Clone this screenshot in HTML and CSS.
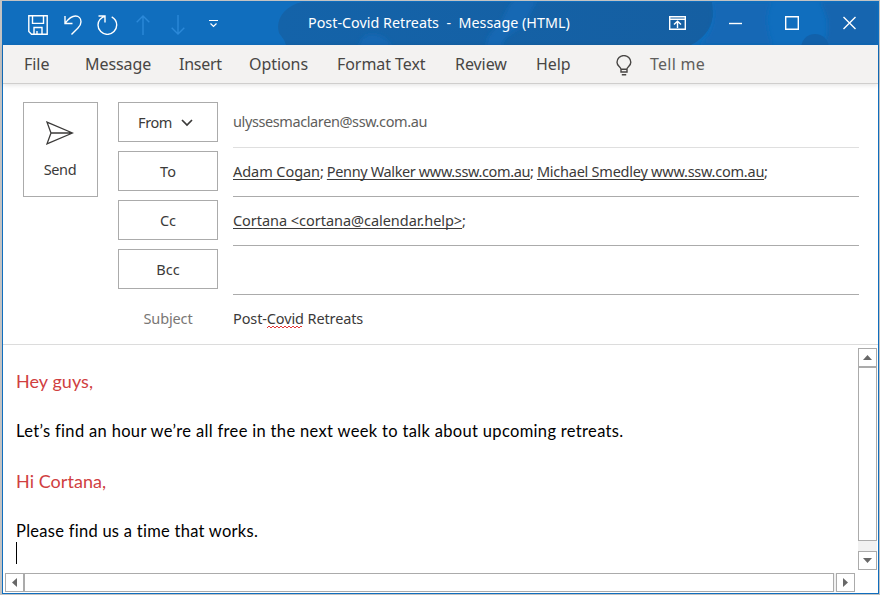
FILE: index.html
```
<!DOCTYPE html>
<html lang="en">
<head>
<meta charset="utf-8">
<title>Post-Covid Retreats - Message (HTML)</title>
<link rel="stylesheet" href="styles.css">
</head>
<body>
<div class="window">
  <header class="titlebar">
    <svg class="clouds" width="875" height="43" viewBox="3 2 875 43">
      <defs>
        <linearGradient id="deep" x1="0" x2="1"><stop offset="0" stop-color="#1463a9"/><stop offset="1" stop-color="#155fa2"/></linearGradient>
        <filter id="soft"><feGaussianBlur stdDeviation="2"/></filter>
      </defs>
      <path d="M302 2C284 6 275 20 279 33l5 7 2 5h405c20-10 25-28 21-43z" fill="url(#deep)"/>
      <g filter="url(#soft)">
        <path d="M358 48c2-10 8-14 14-14s18 4 20 14zM502 48c0-10 12-17 22-22 4-8 8-18 14-26h-24c-8 8-10 16-14 24-10 8-14 14-14 24z" fill="#1268b3"/>
        <path d="M712 2h60c-8 12-5 27 0 43h-74c14-8 19-28 14-43z" fill="#1268b5"/>
        <path d="M820 2h58v43h-55c8-14 5-30-3-43z" fill="#1265af"/>
      </g>
      <circle cx="815" cy="48" r="14" fill="#1261aa"/>
    </svg>
    <div class="quick">
      <svg width="20" height="20" viewBox="0 0 20 20"><path d="M.8.8h18.4v18.4H3.5L.8 16.5zM4.5 1v7.4h11V1M6 19v-6.5h8V19M9 16v3"/></svg>
      <svg width="18" height="20" viewBox="0 0 18 20"><path d="M1 1v7.5h7.5M1.2 8.2C5 3 8 1 11.500 1c3.300 0 5.500 2.500 5.500 5.700 0 2.500-1 4.200-3 6.200L7.500 19.500"/></svg>
      <svg width="21" height="20" viewBox="0 0 21 20"><path d="M1.500 1H8v6.500M8 1.200C3.500 3 1 6 1 10a9.300 9.300 0 0 0 18.700 0c0-3.600-1.700-6.400-5-8.200"/></svg>
      <svg class="dim" width="14" height="20" viewBox="0 0 14 20"><path d="M7 20V1M.7 7.300 7 1l6.300 6.300"/></svg>
      <svg class="dim" width="14" height="20" viewBox="0 0 14 20"><path d="M7 0v19M.7 12.700 7 19l6.300-6.300"/></svg>
      <svg width="9" height="20" viewBox="0 0 9 20"><path d="M0 5.500h9M1.500 8.500l3 3 3-3"/></svg>
    </div>
    <div class="caption">Post-Covid Retreats&nbsp; -&nbsp; Message (HTML)</div>
    <div class="controls">
      <svg width="17" height="14" viewBox="0 0 17 14"><path d="M.7.7h15.600v12.600H.7zM1 3.200h15M8.500 12V5.500M5 8.500l3.500-3.300L12 8.500"/></svg>
      <svg width="13" height="14" viewBox="0 0 13 14"><path d="M0 7.500h13"/></svg>
      <svg width="14" height="14" viewBox="0 0 14 14"><path d="M.7.7h12.600v12.600H.7z"/></svg>
      <svg width="13" height="14" viewBox="0 0 13 14"><path d="m.5 1 12 12M12.500 1l-12 12"/></svg>
    </div>
  </header>
  <nav class="tabs">
    <span>File</span><span>Message</span><span class="tab-insert">Insert</span><span>Options</span><span>Format Text</span><span>Review</span><span>Help</span>
    <svg width="16" height="21" viewBox="0 0 16 21"><path d="M5 14.300C4.700 11.500 1 11 1 7.200a6.800 6.500 0 0 1 13.800 0c0 3.800-3.500 4.300-4 7.100zM5 14v3h6v-3M5.800 19.700h4.400"/></svg>
    <span class="tell">Tell me</span>
  </nav>
  <section class="compose">
    <button class="send">
      <svg width="28" height="24" viewBox="0 0 28 24"><path d="M1 1.200 26.500 12 1 22.800 5 12zM5 12h21"/></svg>
      <span>Send</span>
    </button>
    <div class="fields">
      <button class="from"><span>From</span><svg width="12" height="8" viewBox="0 0 12 8"><path d="m1 1 5 5 5-5"/></svg></button>
      <div class="value sender">ulyssesmaclaren@ssw.com.au</div>
      <button>To</button>
      <div class="value"><u class="adam">Adam Cogan</u>; <u class="penny">Penny Walker www.ssw.com.au</u>; <u class="michael">Michael Smedley www.ssw.com.au</u>;</div>
      <button>Cc</button>
      <div class="value"><u class="cortana">Cortana &lt;cortana@calendar.help&gt;</u>;</div>
      <button>Bcc</button>
      <div class="value"></div>
      <label>Subject</label>
      <div class="value subject">Post-<span class="typo">Covid<svg width="37" height="4" viewBox="0 0 37 4"><path d="m0 3 2-2 2 2 2-2 2 2 2-2 2 2 2-2 2 2 2-2 2 2 2-2 2 2 2-2 2 2 2-2 2 2 2-2 1 1"/></svg></span> Retreats</div>
    </div>
  </section>
  <main class="body">
    <article class="message">
      <p class="greet">Hey guys,</p>
      <p>Let’s find an hour we’re all free in the next week to talk about upcoming retreats.</p>
      <p class="greet">Hi Cortana,</p>
      <p class="request">Please find us a time that works.</p>
      <div class="caret"></div>
    </article>
    <div class="vscroll">
      <div class="arrow"><svg width="9" height="5" viewBox="0 0 9 5"><path d="M0 5 4.500 0 9 5z"/></svg></div>
      <div class="thumb"></div>
      <div class="arrow"><svg width="9" height="5" viewBox="0 0 9 5"><path d="M0 0l4.500 5L9 0z"/></svg></div>
    </div>
    <div class="hscroll">
      <div class="arrow"><svg width="5" height="9" viewBox="0 0 5 9"><path d="M5 0v9L0 4.500z"/></svg></div>
      <div class="thumb"></div>
      <div class="arrow"><svg width="5" height="9" viewBox="0 0 5 9"><path d="M0 0v9l5-4.500z"/></svg></div>
    </div>
  </main>
</div>
</body>
</html>
```
FILE: styles.css
```
* { box-sizing: border-box; }
body {
  margin: 0;
  padding: 1px 1px 1px 2px;
  height: 595px;
  background: #c3c3c3;
  font-family: "Noto Sans", sans-serif;
  overflow: hidden;
}
.window {
  height: 593px;
  border: 1px solid #106ebe;
  background: #fff;
  display: grid;
  grid-template-rows: 43px 39px 261px 1fr;
}
svg { fill: none; stroke: currentColor; stroke-width: 1.4; display: block; flex: none; }
button {
  font: inherit;
  color: inherit;
  background: #fff;
  border: 1px solid #ababab;
  padding: 0;
}

.titlebar {
  position: relative;
  display: grid;
  grid-template-columns: 25px 280px 361px 1fr;
  align-items: center;
  background: #106ebe;
  color: #fff;
}
.clouds { position: absolute; inset: 0; stroke: none; }
.quick { position: relative; grid-column: 2; display: flex; padding-top: 3px; }
.quick svg:nth-child(2) { margin-left: 16px; }
.quick svg:nth-child(3) { margin-left: 15px; }
.quick svg:nth-child(4) { margin-left: 18px; }
.quick svg:nth-child(5) { margin-left: 21px; }
.quick svg:nth-child(6) { margin-left: 24px; stroke-width: 1.2; }
.dim { color: #2b88d8; }
.caption { position: relative; padding-bottom: 2px; font-size: 14.3px; letter-spacing: 0.02px; white-space: nowrap; }
.controls { position: relative; display: flex; padding-bottom: 1px; }
.controls svg:nth-child(2) { margin-left: 43px; }
.controls svg:nth-child(3) { margin-left: 43px; }
.controls svg:nth-child(4) { margin-left: 44px; }

.tabs {
  display: grid;
  grid-template-columns: 61px 94px 70px 88px 118px 81px 80px 34px 1fr;
  align-items: center;
  padding-left: 21px;
  background: #f3f2f1;
  border-bottom: 1px solid #cfcecd;
  box-shadow: 0 1px 5px rgba(0, 0, 0, 0.12);
  color: #484644;
  font-size: 16px;
  letter-spacing: -0.06px;
  white-space: nowrap;
  z-index: 1;
}
.tabs svg { margin-top: 2px; }
.tab-insert { letter-spacing: -0.25px; }
.tell { letter-spacing: 0.25px; color: #605e5c; }

.compose {
  display: flex;
  align-items: flex-start;
  gap: 20px;
  padding: 18px 19px 0 20px;
  border-bottom: 1px solid #dcdcdc;
  color: #3b3a39;
  font-size: 14.5px;
}
.send {
  width: 75px;
  height: 95px;
  display: flex;
  flex-direction: column;
  align-items: center;
  gap: 14px;
  padding: 18px 1px 0 0;
  letter-spacing: -0.4px;
}
.send svg { stroke-width: 1.3; }
.fields {
  flex: 1;
  display: grid;
  grid-template-columns: 100px 1fr;
  grid-auto-rows: 49px;
  column-gap: 15px;
}
.fields button { height: 40px; }
.from { display: flex; align-items: center; justify-content: center; gap: 9px; padding-right: 5px; letter-spacing: -0.4px; }
.from svg { margin-top: 2px; stroke-width: 1.7; }
label { line-height: 40px; text-align: center; color: #797775; letter-spacing: -0.14px; }
.value { height: 46px; line-height: 40px; border-bottom: 1px solid #ababab; white-space: nowrap; letter-spacing: -0.4px; }
.value u { text-decoration-thickness: 1px; text-underline-offset: 2px; text-decoration-skip-ink: none; }
.sender { line-height: 39px; color: #605e5c; border-color: #dfdfdf; }
.adam { letter-spacing: -0.06px; }
.penny { letter-spacing: -0.37px; }
.michael { letter-spacing: -0.24px; }
.cortana { letter-spacing: -0.04px; }
.subject { border: 0; letter-spacing: -0.12px; }
.typo { position: relative; }
.typo svg { position: absolute; left: 0; bottom: -1px; color: #e02020; stroke-width: 0.9; }

.body {
  display: grid;
  grid-template-columns: 1fr 20px;
  grid-template-rows: 1fr 20px;
  min-height: 0;
  padding-top: 3px;
}
.message {
  padding: 21px 0 0 13px;
  font-family: Lato, sans-serif;
  font-size: 16.5px;
  letter-spacing: 0.33px;
  color: #000;
}
.message p { margin: 0 0 26px; height: 24px; line-height: 24px; white-space: nowrap; }
.message .greet { font-size: 18px; letter-spacing: 0.05px; color: #d0403f; }
.message .request { letter-spacing: 0.27px; margin-bottom: -1px; }
.caret { width: 1px; height: 22px; background: #000; }
.arrow { display: flex; align-items: center; justify-content: center; border: 1px solid #ababab; background: #fff; }
.arrow svg { fill: #686868; stroke: none; }
.thumb { border: 1px solid #ababab; background: #fff; }
.vscroll {
  display: grid;
  grid-template-rows: 19px 174px 1fr;
  width: 19px;
  height: 222px;
  background: #f1f1f1;
}
.vscroll .arrow:last-child { align-self: end; height: 19px; }
.hscroll {
  grid-column: 1 / -1;
  display: grid;
  grid-template-columns: 19px 810px 2px 19px;
  height: 19px;
  width: 850px;
  margin-left: 2px;
  background: #f1f1f1;
}
.hscroll .arrow:last-child { grid-column: 4; }
```
